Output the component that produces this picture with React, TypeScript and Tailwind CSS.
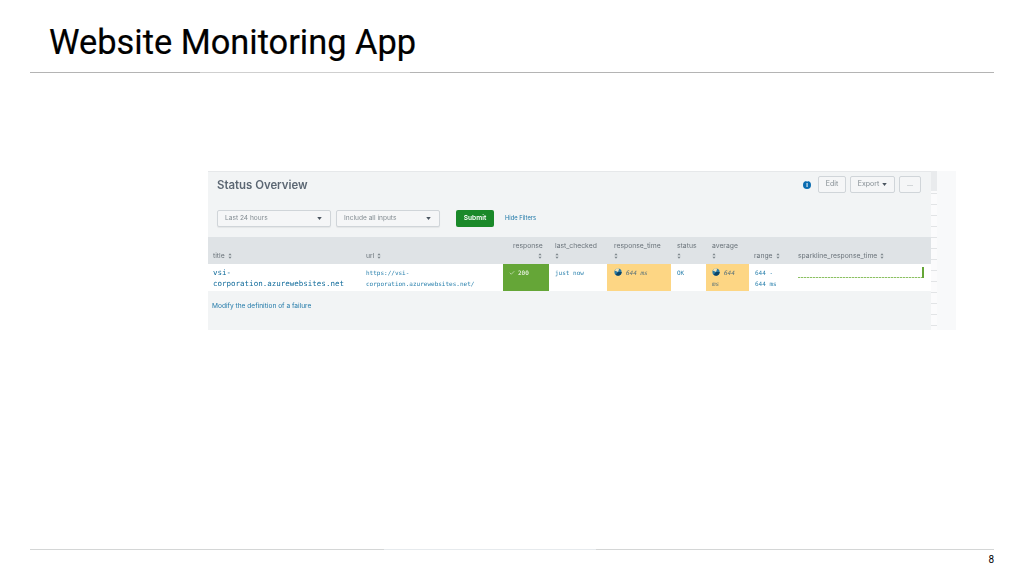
import { Check } from 'lucide-react';

const cols = 'grid-cols-[153px_142px_46px_58px_64px_35px_43px_43px_139px]';

function Sort({ className = '' }: { className?: string }) {
  return (
    <svg viewBox="0 0 5 7" className={`inline-block w-[4px] h-[6px] fill-[#7d868c] ${className}`}>
      <path d="M2.5 0 L4.5 2.6 H0.5 Z M2.5 7 L0.5 4.4 H4.5 Z" />
    </svg>
  );
}

function Caret({ className = '' }: { className?: string }) {
  return (
    <svg viewBox="0 0 6 4" className={`w-[5px] h-[3px] fill-[#4b5560] ${className}`}>
      <path d="M0 0 H6 L3 4 Z" />
    </svg>
  );
}

function Pie() {
  return (
    <svg viewBox="0 0 10 10" className="w-[8px] h-[8px] shrink-0">
      <circle cx="5" cy="5" r="4.5" fill="#2a7aa6" />
      <path d="M5 5 L6.5 0.8 A4.5 4.5 0 0 0 1 3 Z" fill="#f4e3b6" />
      <path d="M5 5 L9.5 5 A4.5 4.5 0 0 1 2 8.5 Z" fill="#0d4566" />
    </svg>
  );
}

function HeadCell({ label, stacked, align, pad }: { label: string; stacked?: boolean; align?: string; pad?: string }) {
  if (stacked) {
    return (
      <div className={`pt-[4px] flex flex-col gap-[3px] ${align ? 'pl-[10px] pr-[7px]' : pad ?? 'pl-[6px]'}`}>
        <span className="leading-[9px] text-[#6b747b] whitespace-nowrap">{label}</span>
        <span className={`leading-[8px] flex ${align ?? ''}`}><Sort /></span>
      </div>
    );
  }
  return (
    <div className={`pb-[4px] self-end flex items-center gap-[3px] text-[#6b747b] whitespace-nowrap leading-[9px] ${pad ?? 'px-[5px]'}`}>
      {label} <Sort />
    </div>
  );
}

function Filter({ label, width }: { label: string; width: string }) {
  return (
    <div className={`${width} h-[17px] bg-[#f5f6f7] border border-[#d0d5d9] rounded-[2px] shadow-[0_1px_1px_rgba(0,0,0,0.06)] flex items-center justify-between pl-[7px] pr-[8px] text-[#838c92]`}>
      <span>{label}</span>
      <Caret />
    </div>
  );
}

function ToolButton({ children, width }: { children: React.ReactNode; width: string }) {
  return (
    <div className={`${width} h-[17px] bg-[#f5f6f7] border border-[#d0d5d9] rounded-[2px] flex items-center justify-center gap-[3px] text-[#838c92] text-[7px]`}>
      {children}
    </div>
  );
}

export default function App() {
  return (
    <div className="w-[1024px] h-[576px] bg-white overflow-hidden flex flex-col font-['Roboto',sans-serif]">
      {/* Slide title */}
      <div className="relative h-[73px] mx-[30px] border-b border-[#b4b4b4] pl-[19px] pt-[22px] shrink-0">
        <h1 className="text-[34.4px] leading-[40px] text-black [-webkit-text-stroke:0.2px_black]">Website Monitoring App</h1>
        <div className="absolute left-[170px] bottom-[-1px] w-[210px] h-[1px] bg-[#cfcfcf]" />
      </div>

      {/* Screenshot of the Splunk dashboard */}
      <div className="flex-1 pt-[98px] pl-[208px]">
        <div className="w-[748px] h-[159px] flex font-['Inter',sans-serif] text-[6.6px] blur-[0.45px]">
          <div className="w-[723px] bg-[#f2f4f5] border-t border-[#e6e8ea] flex flex-col">
            <div className="h-[65px] flex-none">
              <div className="flex items-center justify-between pl-[9px] pr-[10px] pt-[4px]">
                <span className="text-[11.4px] leading-[16px] font-semibold text-[#5c6773]">Status Overview</span>
                <div className="flex items-center gap-[4px]">
                  <span className="w-[8px] h-[8px] mr-[3px] rounded-full bg-[#0b6cb0] text-white text-[6px] leading-[8px] text-center font-bold">i</span>
                  <ToolButton width="w-[28px]">Edit</ToolButton>
                  <ToolButton width="w-[45px]">Export <Caret /></ToolButton>
                  <ToolButton width="w-[22px]">...</ToolButton>
                </div>
              </div>
              <div className="flex items-center pl-[9px] pt-[17px]">
                <Filter label="Last 24 hours" width="w-[114px]" />
                <Filter label="Include all inputs" width="w-[104px] ml-[5px]" />
                <div className="w-[38px] h-[17px] ml-[16px] bg-[#1a8929] rounded-[2px] text-white font-semibold text-center leading-[17px]">Submit</div>
                <span className="ml-[11px] text-[5.8px] text-[#1f78a8]">Hide Filters</span>
              </div>
            </div>

            {/* Table */}
            <div className={`grid ${cols} h-[27px] bg-[#dfe3e6] text-[6.8px]`}>
              <HeadCell label="title" />
              <HeadCell label="url" />
              <HeadCell label="response" stacked align="justify-end" />
              <HeadCell label="last_checked" stacked />
              <HeadCell label="response_time" stacked pad="pl-[7px]" />
              <HeadCell label="status" stacked />
              <HeadCell label="average" stacked />
              <HeadCell label="range" />
              <HeadCell label="sparkline_response_time" pad="pl-[6px]" />
            </div>
            <div className={`grid ${cols} h-[27px] bg-white font-['DejaVu_Sans_Mono',monospace] text-[6px] leading-[11px] text-[#2a80ad]`}>
              <div className="pl-[5px] pt-[3px] text-[7.5px] text-[#0f6a9a]">vsi-<br />corporation.azurewebsites.net</div>
              <div className="pl-[5px] pt-[3px]">https://vsi-<br />corporation.azurewebsites.net/</div>
              <div className="bg-[#65a637] text-white pl-[6px] pt-[3px] flex items-start gap-[3px]">
                <Check className="w-[6px] h-[6px] mt-[3px]" strokeWidth={2} /> 200
              </div>
              <div className="pl-[6px] pt-[3px]">just now</div>
              <div className="bg-[#fdd684] pl-[7px] pt-[3px] flex items-start gap-[4px] italic text-[#56707a]">
                <span className="mt-[1px]"><Pie /></span> 644 ms
              </div>
              <div className="pl-[6px] pt-[3px]">OK</div>
              <div className="bg-[#fdd684] pl-[6px] pt-[3px] italic text-[#56707a]">
                <span className="inline-block align-[-1px] mr-[4px]"><Pie /></span>644<br />ms
              </div>
              <div className="pl-[6px] pt-[3px]">644 -<br />644 ms</div>
              <div className="relative">
                <div className="absolute left-[6px] right-[7px] top-[13px] h-[1px] bg-[repeating-linear-gradient(90deg,#8cc063_0px,#8cc063_2px,#d8eccb_2px,#d8eccb_3px)]" />
                <div className="absolute right-[7px] top-[3px] w-[2px] h-[11px] bg-[#65a637]" />
              </div>
            </div>
            <div className="pl-[4px] pt-[11px] text-[#1f78a8]">Modify the definition of a failure</div>
          </div>

          {/* Cropped scrollbar strip */}
          <div className="w-[6px] bg-[repeating-linear-gradient(180deg,#e2e4e6_0px,#e2e4e6_1px,#fbfbfc_1px,#fbfbfc_11px)]">
            <div className="h-[20px] bg-[#e9ebed]" />
          </div>
          <div className="w-[19px] bg-[#f8f9fa]" />
        </div>
      </div>

      {/* Footer */}
      <div className="relative h-[27px] mx-[30px] border-t border-[#d4d6d6] shrink-0 flex justify-end pt-[3px]">
        <div className="absolute left-[354px] top-[-1px] w-[212px] h-[1px] bg-[#e6eaed]" />
        <span className="text-[10px] leading-[14px] text-black">8</span>
      </div>
    </div>
  );
}
